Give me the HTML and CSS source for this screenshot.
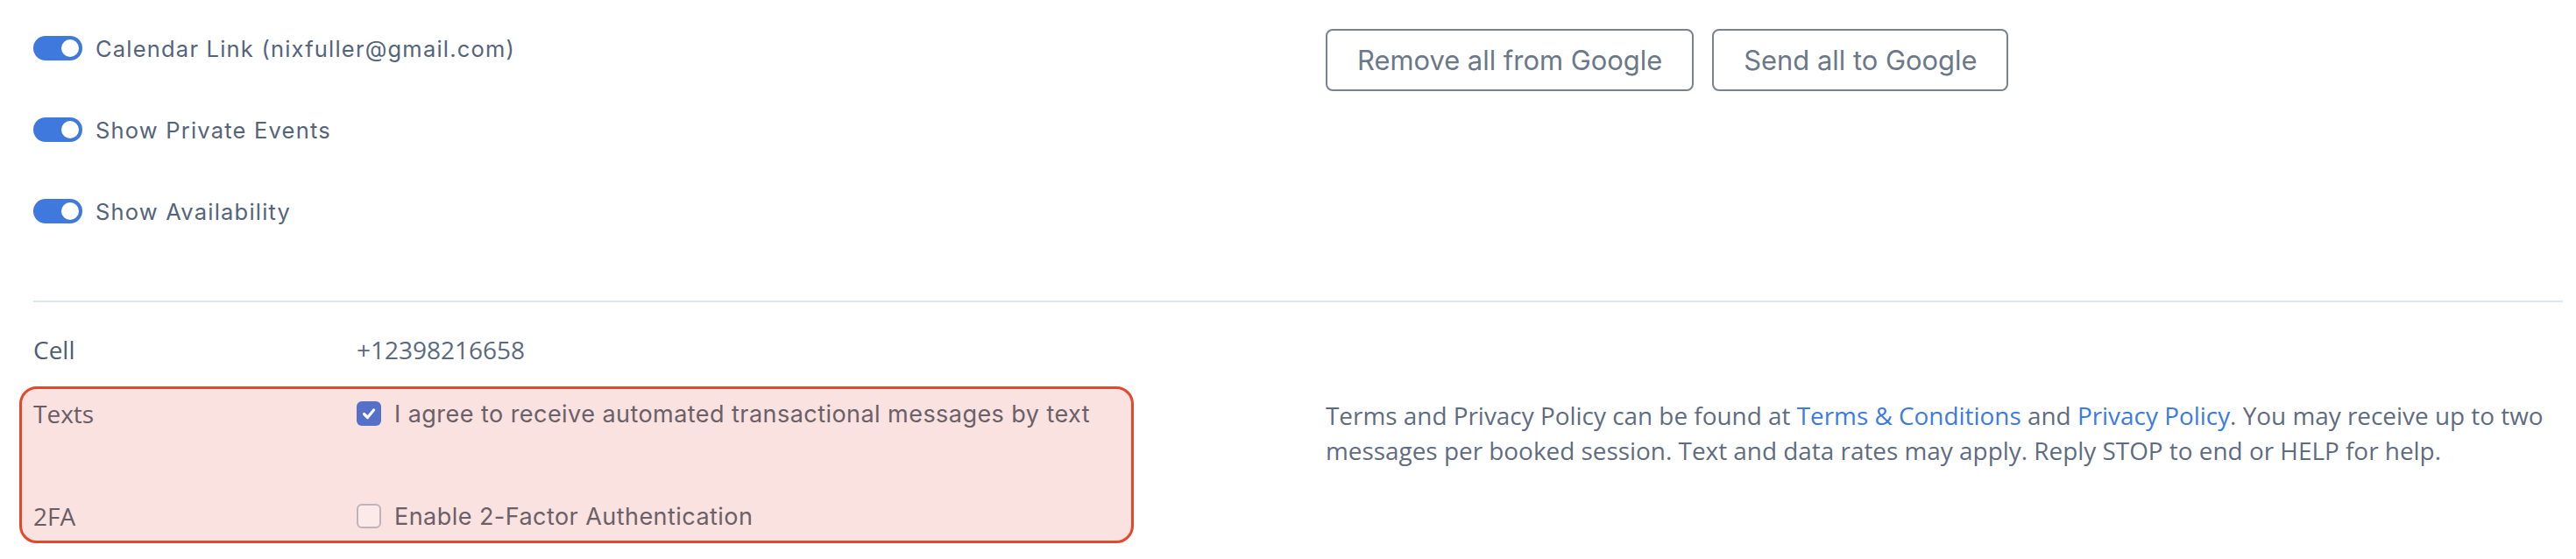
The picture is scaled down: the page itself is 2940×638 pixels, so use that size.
FILE: index.html
```html
<!DOCTYPE html>
<html lang="en">
<head>
<meta charset="utf-8">
<title>Settings</title>
<link rel="stylesheet" href="styles.css">
</head>
<body>
<div class="page">
  <section class="top">
    <div class="toggles">
      <div class="toggle-row">
        <span class="switch"><span class="knob"></span></span>
        <span class="toggle-label">Calendar Link (nixfuller@gmail.com)</span>
      </div>
      <div class="toggle-row">
        <span class="switch"><span class="knob"></span></span>
        <span class="toggle-label">Show Private Events</span>
      </div>
      <div class="toggle-row">
        <span class="switch"><span class="knob"></span></span>
        <span class="toggle-label">Show Availability</span>
      </div>
    </div>
    <div class="actions">
      <button class="btn">Remove all from Google</button>
      <button class="btn">Send all to Google</button>
    </div>
  </section>
  <hr class="divider">
  <section class="bottom">
    <div class="field cell-row">
      <span class="label">Cell</span>
      <span class="value">+12398216658</span>
    </div>
    <div class="spacer"></div>
    <div class="highlight">
      <div class="field hl-row">
        <span class="label hl-label">Texts</span>
        <span class="check">
          <span class="box checked">
            <svg viewBox="0 0 28 28" width="28" height="28"><polyline points="8.5,14.5 12.5,18.5 19.5,10" fill="none" stroke="#ffffff" stroke-width="3.2" stroke-linecap="round" stroke-linejoin="round"/></svg>
          </span>
          <span class="check-label">I agree to receive automated transactional messages by text</span>
        </span>
      </div>
      <div class="field hl-row">
        <span class="label hl-label">2FA</span>
        <span class="check">
          <span class="box"></span>
          <span class="check-label">Enable 2-Factor Authentication</span>
        </span>
      </div>
    </div>
    <p class="terms">Terms and Privacy Policy can be found at <a class="link">Terms &amp; Conditions</a> and <a class="link">Privacy Policy</a>. You may receive up to two messages per booked session. Text and data rates may apply. Reply STOP to end or HELP for help.</p>
  </section>
</div>
</body>
</html>
```

FILE: styles.css
```css
* { box-sizing: border-box; }

body {
  margin: 0;
  background: #ffffff;
  font-family: Inter, "Liberation Sans", sans-serif;
}

.page {
  padding: 0 15px 0 38px;
}

.top {
  display: grid;
  grid-template-columns: 1475px 1fr;
  padding-top: 35px;
  padding-bottom: 88px;
}

.toggles {
  display: flex;
  flex-direction: column;
  gap: 65px;
  padding-top: 6px;
}

.toggle-row {
  display: flex;
  align-items: center;
  gap: 15px;
  height: 28px;
}

.switch {
  position: relative;
  width: 56px;
  height: 28px;
  border-radius: 14px;
  background: #3f79de;
  flex: none;
}

.knob {
  position: absolute;
  top: 4px;
  right: 4px;
  width: 20px;
  height: 20px;
  border-radius: 50%;
  background: #ffffff;
}

.toggle-label {
  font-size: 25.5px;
  letter-spacing: 1.2px;
  color: #55647a;
}

.actions {
  display: flex;
  gap: 21px;
  align-items: flex-start;
  margin-top: -2px;
}

.btn {
  height: 71px;
  padding: 0 34px;
  border: 2px solid #77838f;
  border-radius: 8px;
  background: #ffffff;
  font-family: Inter, "Liberation Sans", sans-serif;
  font-size: 30.9px;
  color: #6b7888;
}

.divider {
  margin: 0;
  border: 0;
  border-top: 2px solid #e0e6ee;
}

.bottom {
  display: grid;
  grid-template-columns: 1475px 1fr;
  row-gap: 14px;
  padding-top: 25px;
}

.field {
  display: grid;
  grid-template-columns: 369px 1fr;
  align-items: center;
}

.cell-row {
  height: 58px;
}

.label, .value, .terms {
  font-family: "Open Sans", "Noto Sans", sans-serif;
}

.label {
  font-size: 28px;
  color: #4f5e73;
}

.value {
  font-size: 28px;
  color: #5b6a7e;
}

.highlight {
  width: 1272px;
  margin-left: -16px;
  margin-top: -1px;
  padding-left: 13px;
  border: 3px solid #e6472c;
  border-radius: 20px;
  background: #f9e2df;
  display: flex;
  flex-direction: column;
  gap: 61px;
}

.hl-row {
  height: 56px;
}

.hl-label {
  color: #6a5d66;
}

.check {
  display: flex;
  align-items: center;
  gap: 15px;
}

.box {
  width: 28px;
  height: 28px;
  border-radius: 6px;
  border: 2px solid #bfb3bb;
  background: #fbeae8;
  flex: none;
  display: flex;
}

.box.checked {
  border: 0;
  background: #5570c8;
}

.check-label {
  font-size: 27px;
  letter-spacing: 0.45px;
  color: #6c6068;
}

.terms {
  margin: 12px 0 0;
  font-size: 27.9px;
  line-height: 40px;
  color: #5f6c7f;
}

.link {
  color: #3b7be2;
  text-decoration: none;
}
```
